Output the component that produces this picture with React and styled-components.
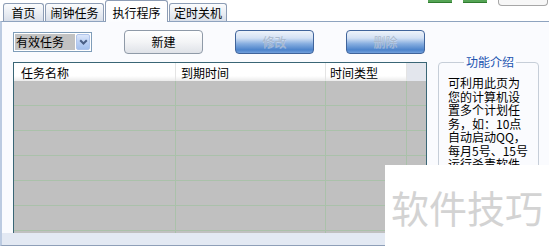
import React from 'react';
import styled, { createGlobalStyle, css } from 'styled-components';

const GlobalStyle = createGlobalStyle`
  html, body {
    margin: 0;
    padding: 0;
    background: #fff;
  }
  body {
    font-family: "Noto Sans CJK SC", "Noto Sans", sans-serif;
    font-size: 12px;
    color: #000;
  }
`;

const Window = styled.div`
  position: relative;
  width: 550px;
  height: 247px;
  overflow: hidden;
  display: flex;
  flex-direction: column;
  background: #fff;
`;

const TabStrip = styled.div`
  height: 21px;
  display: flex;
  align-items: flex-end;
  gap: 1px;
  padding-left: 3px;
`;

const Tab = styled.div`
  position: relative;
  box-sizing: border-box;
  width: ${p => p.$w}px;
  height: ${p => (p.$active ? 22 : 18)}px;
  margin-bottom: ${p => (p.$active ? -1 : 0)}px;
  z-index: ${p => (p.$active ? 2 : 0)};
  padding-top: ${p => (p.$active ? 2 : 0)}px;
  border: 1px solid #8d9db5;
  border-bottom: none;
  border-radius: 3px 3px 0 0;
  background: ${p =>
    p.$active
      ? 'linear-gradient(#ffffff, #fbfcfe)'
      : 'linear-gradient(#fbfcfd, #e9edf3 55%, #d9dfe9)'};
  display: flex;
  align-items: center;
  justify-content: center;
  line-height: 14px;
  white-space: nowrap;
`;

const TopDecor = styled.div`
  margin-left: auto;
  align-self: flex-start;
  display: flex;
  gap: 11px;
  padding-right: 2px;
`;

const GreenStub = styled.div`
  width: 24px;
  height: 2px;
  background: #55a455;
  border-bottom: 1px solid #2f7b2f;
`;

const GreyStub = styled.div`
  box-sizing: border-box;
  width: 50px;
  height: 6px;
  border: 1px solid #a7a7a7;
  border-top: none;
  border-radius: 0 0 4px 4px;
  background: #f7f7f7;
`;

const Panel = styled.div`
  box-sizing: border-box;
  height: 225px;
  margin-right: 1px;
  border-top: 1px solid #8ea3bf;
  border-left: 2px solid #bccbe1;
  border-bottom: 1px solid #8e9fb8;
  background: #fafbfe;
  display: flex;
  flex-direction: column;
`;

const Content = styled.div`
  flex: 1;
  display: flex;
  flex-direction: column;
  gap: 8px;
  padding: 8px 0 0 11px;
`;

const Footer = styled.div`
  height: 12px;
  background: #e3e9f3;
`;

const Toolbar = styled.div`
  height: 24px;
  display: flex;
  align-items: center;
  gap: 32px;
`;

const Combo = styled.div`
  box-sizing: border-box;
  width: 79px;
  height: 20px;
  padding: 1px;
  border: 1px solid #7f9db9;
  background: #fff;
  display: flex;
  gap: 1px;
`;

const ComboValue = styled.div`
  flex: 1;
  padding-left: 1px;
  background: #c2c2c2;
  line-height: 16px;
  white-space: nowrap;
`;

const ComboArrow = styled.div`
  box-sizing: border-box;
  width: 14px;
  border: 1px solid #b0c5ec;
  border-radius: 2px;
  background: linear-gradient(#dce7fb, #bcd1f4 50%, #a4c0ee);
  display: flex;
  align-items: center;
  justify-content: center;
`;

const Button = styled.button`
  box-sizing: border-box;
  width: 79px;
  height: 24px;
  padding: 0;
  border-radius: 4px;
  font-family: inherit;
  font-size: 12px;
  line-height: 14px;
  cursor: default;
  ${p =>
    p.$blue
      ? css`
          border: 1px solid #40649b;
          color: #a9b8cc;
          background: linear-gradient(#eef3fa 0%, #d3e1f4 32%, #87aee0 58%, #4c83cb 86%, #72a0dc 100%);
          text-shadow: 0 1px 0 rgba(255, 255, 255, 0.35);
        `
      : css`
          border: 1px solid #8f9aa8;
          color: #000;
          background: linear-gradient(#ffffff, #f3f4f6 50%, #dfe2e8);
        `}
`;

const MainRow = styled.div`
  height: 171px;
  display: flex;
  align-items: flex-start;
  gap: 11px;
`;

const Grid = styled.div`
  box-sizing: border-box;
  width: 414px;
  height: 171px;
  border: 1px solid #3a6676;
  border-bottom: none;
  background: #c0c0c0;
  overflow: hidden;
`;

const columns = '162px 150px 81px 1fr';

const HeaderRow = styled.div`
  display: grid;
  grid-template-columns: ${columns};
  height: 18px;
  background: linear-gradient(#ffffff 0%, #ffffff 72%, #ebebeb 100%);
`;

const HeaderCell = styled.div`
  box-sizing: border-box;
  padding: 1px 0 0 ${p => p.$pad}px;
  border-right: ${p => (p.$filler ? 'none' : '1px solid #e4e4e4')};
  background: ${p => (p.$filler ? '#e3e6ed' : 'transparent')};
  line-height: 17px;
  white-space: nowrap;
`;

const BodyRow = styled.div`
  box-sizing: border-box;
  display: grid;
  grid-template-columns: ${columns};
  height: 25px;
  border-bottom: 1px solid #aac1aa;
`;

const BodyCell = styled.div`
  border-right: ${p => (p.$last ? 'none' : '1px solid #aac1aa')};
`;

const GroupBox = styled.fieldset`
  box-sizing: border-box;
  width: 101px;
  height: 178px;
  min-width: 0;
  margin: -7px 0 0;
  padding: 7px 6px 0 9px;
  border: 1px solid #c6ced8;
  border-radius: 4px;
`;

const GroupTitle = styled.legend`
  margin: 0 auto;
  padding: 0 2px;
  color: #2153b0;
  font-size: 12px;
  line-height: 14px;
`;

const GroupText = styled.p`
  width: 82px;
  margin: 0;
  line-height: 13.5px;
`;

const Watermark = styled.div`
  position: absolute;
  right: 0;
  bottom: 0;
  box-sizing: border-box;
  width: 165px;
  height: 82px;
  padding: 2px 0 0 6px;
  background: #fff;
  color: #d3d3d3;
  font-size: 38px;
  line-height: 1;
  display: flex;
  align-items: center;
  white-space: nowrap;
`;

const tabs = [
  { label: '首页', w: 41 },
  { label: '闹钟任务', w: 59 },
  { label: '执行程序', w: 63, active: true },
  { label: '定时关机', w: 58 },
];

const headers = [
  { label: '任务名称', pad: 7 },
  { label: '到期时间', pad: 5 },
  { label: '时间类型', pad: 4 },
];

export default function App() {
  return (
    <>
      <GlobalStyle />
      <Window>
        <TabStrip>
          {tabs.map(t => (
            <Tab key={t.label} $w={t.w} $active={t.active}>
              {t.label}
            </Tab>
          ))}
          <TopDecor>
            <GreenStub />
            <GreenStub />
            <GreyStub />
          </TopDecor>
        </TabStrip>

        <Panel>
          <Content>
            <Toolbar>
              <Combo>
                <ComboValue>有效任务</ComboValue>
                <ComboArrow>
                  <svg width="9" height="6" viewBox="0 0 9 6">
                    <path d="M1.2 1.2 L4.5 4.5 L7.8 1.2" fill="none" stroke="#4a5f86" strokeWidth="2" />
                  </svg>
                </ComboArrow>
              </Combo>
              <Button>新建</Button>
              <Button $blue>修改</Button>
              <Button $blue>删除</Button>
            </Toolbar>

            <MainRow>
              <Grid>
                <HeaderRow>
                  {headers.map(h => (
                    <HeaderCell key={h.label} $pad={h.pad}>
                      {h.label}
                    </HeaderCell>
                  ))}
                  <HeaderCell $filler />
                </HeaderRow>
                {Array.from({ length: 7 }).map((_, i) => (
                  <BodyRow key={i}>
                    <BodyCell />
                    <BodyCell />
                    <BodyCell />
                    <BodyCell $last />
                  </BodyRow>
                ))}
              </Grid>

              <GroupBox>
                <GroupTitle>功能介绍</GroupTitle>
                <GroupText>
                  可利用此页为您的计算机设置多个计划任务，如：10点自动启动QQ，每月5号、15号运行杀毒软件等。
                </GroupText>
              </GroupBox>
            </MainRow>
          </Content>
          <Footer />
        </Panel>

        <Watermark>软件技巧</Watermark>
      </Window>
    </>
  );
}
